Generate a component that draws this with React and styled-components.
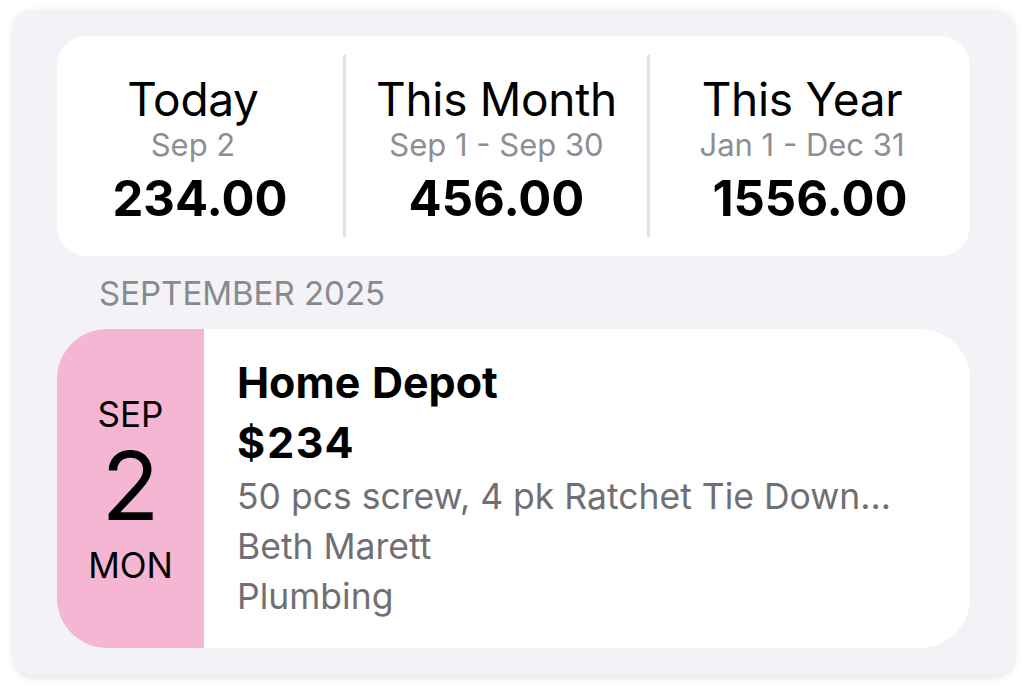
import React from "react";
import styled, { createGlobalStyle } from "styled-components";

const Global = createGlobalStyle`
  html, body { margin: 0; padding: 0; background: #ffffff; }
  body { font-family: Inter, "Noto Sans", "Liberation Sans", sans-serif; -webkit-font-smoothing: antialiased; }
`;

const Page = styled.div`
  width: 1028px;
  height: 693px;
  padding: 10px 14px 0 14px;
  box-sizing: border-box;
`;

const Panel = styled.div`
  width: 1000px;
  height: 665px;
  box-sizing: border-box;
  background: #f2f2f7;
  border-radius: 20px;
  box-shadow: 0 2px 8px rgba(0, 0, 0, 0.13);
  padding: 26px 44px 0 43px;
  display: flex;
  flex-direction: column;
`;

const SummaryCard = styled.div`
  height: 220px;
  background: #fff;
  border-radius: 30px;
  display: grid;
  grid-template-columns: 286px 3px 301px 3px 1fr;
  align-items: stretch;
  padding: 19px 0;
  box-sizing: border-box;
`;

const Divider = styled.div`
  background: #e1e1e6;
`;

const Stat = styled.div`
  display: flex;
  flex-direction: column;
  align-items: center;
  padding-top: 18px;
`;

const StatHead = styled.div`
  display: flex;
  flex-direction: column;
  align-items: center;
  margin-right: ${(p) => p.$shift * 2}px;
`;

const StatTitle = styled.div`
  font-size: 46px;
  line-height: 52px;
  color: #000;
  letter-spacing: -0.3px;
`;

const StatRange = styled.div`
  font-size: 31px;
  line-height: 36px;
  color: #8e8e93;
  margin-top: 2px;
`;

const StatAmount = styled.div`
  font-size: 49px;
  line-height: 56px;
  font-weight: 700;
  color: #000;
  margin-top: 8px;
`;

const SectionHeader = styled.div`
  font-size: 33px;
  line-height: 40px;
  color: #8a8a8e;
  padding-left: 42px;
  margin-top: 17px;
`;

const EntryCard = styled.div`
  margin-top: 16px;
  height: 319px;
  background: #fff;
  border-radius: 50px;
  overflow: hidden;
  display: flex;
`;

const DateCol = styled.div`
  width: 147px;
  background: #f4b6d2;
  display: flex;
  flex-direction: column;
  align-items: center;
  justify-content: center;
  color: #000;
  padding-top: 2px;
  box-sizing: border-box;
`;

const DateSmall = styled.div`
  font-size: 35px;
  line-height: 40px;
`;

const DateDay = styled.div`
  font-size: 95px;
  line-height: 100px;
  margin: 2px 0 9px;
`;

const Details = styled.div`
  padding: 23px 0 0 33px;
  display: flex;
  flex-direction: column;
`;

const Merchant = styled.div`
  font-size: 43px;
  line-height: 60px;
  font-weight: 700;
  color: #000;
  font-variant-numeric: tabular-nums;
  letter-spacing: ${(p) => (p.$wide ? "1.5px" : "0")};
`;

const Meta = styled.div`
  font-size: 35.5px;
  line-height: 50px;
  color: #707074;
  white-space: nowrap;
`;

const stats = [
  { title: "Today", range: "Sep 2", amount: "234.00", shift: 7 },
  { title: "This Month", range: "Sep 1 - Sep 30", amount: "456.00", shift: 0 },
  { title: "This Year", range: "Jan 1 - Dec 31", amount: "1556.00", shift: 8 },
];

export default function App() {
  return (
    <>
      <Global />
      <Page>
        <Panel>
          <SummaryCard>
            {stats.map((s, i) => (
              <React.Fragment key={s.title}>
                {i > 0 && <Divider />}
                <Stat>
                  <StatHead $shift={s.shift}>
                    <StatTitle>{s.title}</StatTitle>
                    <StatRange>{s.range}</StatRange>
                  </StatHead>
                  <StatAmount>{s.amount}</StatAmount>
                </Stat>
              </React.Fragment>
            ))}
          </SummaryCard>
          <SectionHeader>SEPTEMBER 2025</SectionHeader>
          <EntryCard>
            <DateCol>
              <DateSmall>SEP</DateSmall>
              <DateDay>2</DateDay>
              <DateSmall>MON</DateSmall>
            </DateCol>
            <Details>
              <Merchant>Home Depot</Merchant>
              <Merchant $wide>$234</Merchant>
              <Meta>50 pcs screw, 4 pk Ratchet Tie Down...</Meta>
              <Meta>Beth Marett</Meta>
              <Meta>Plumbing</Meta>
            </Details>
          </EntryCard>
        </Panel>
      </Page>
    </>
  );
}
